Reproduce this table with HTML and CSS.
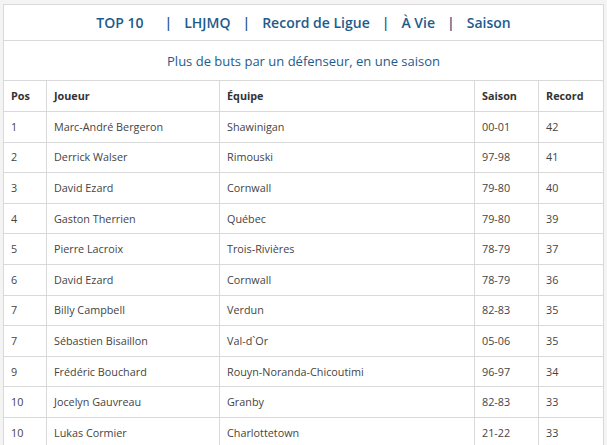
FILE: index.html
```html
<!DOCTYPE html>
<html lang="fr">
<head>
<meta charset="utf-8">
<title>Records LHJMQ</title>
<link rel="stylesheet" href="styles.css">
</head>
<body>
<div class="wrap">
<table class="records">
  <colgroup>
    <col class="c-pos"><col class="c-player"><col class="c-team"><col class="c-season"><col class="c-record">
  </colgroup>
  <thead>
    <tr class="nav-row">
      <th colspan="5">
        <span class="nav-item nav-first">TOP 10</span><span class="sep">|</span><span class="nav-item">LHJMQ</span><span class="sep">|</span><span class="nav-item">Record de Ligue</span><span class="sep">|</span><span class="nav-item">À Vie</span><span class="sep">|</span><span class="nav-item">Saison</span>
      </th>
    </tr>
    <tr class="sub-row">
      <th colspan="5">Plus de buts par un défenseur, en une saison</th>
    </tr>
    <tr class="head-row">
      <th>Pos</th><th>Joueur</th><th>Équipe</th><th>Saison</th><th>Record</th>
    </tr>
  </thead>
  <tbody>
    <tr><td>1</td><td>Marc-André Bergeron</td><td>Shawinigan</td><td>00-01</td><td>42</td></tr>
    <tr><td>2</td><td>Derrick Walser</td><td>Rimouski</td><td>97-98</td><td>41</td></tr>
    <tr><td>3</td><td>David Ezard</td><td>Cornwall</td><td>79-80</td><td>40</td></tr>
    <tr><td>4</td><td>Gaston Therrien</td><td>Québec</td><td>79-80</td><td>39</td></tr>
    <tr><td>5</td><td>Pierre Lacroix</td><td>Trois-Rivières</td><td>78-79</td><td>37</td></tr>
    <tr><td>6</td><td>David Ezard</td><td>Cornwall</td><td>78-79</td><td>36</td></tr>
    <tr><td>7</td><td>Billy Campbell</td><td>Verdun</td><td>82-83</td><td>35</td></tr>
    <tr><td>7</td><td>Sébastien Bisaillon</td><td>Val-d`Or</td><td>05-06</td><td>35</td></tr>
    <tr><td>9</td><td>Frédéric Bouchard</td><td>Rouyn-Noranda-Chicoutimi</td><td>96-97</td><td>34</td></tr>
    <tr><td>10</td><td>Jocelyn Gauvreau</td><td>Granby</td><td>82-83</td><td>33</td></tr>
    <tr><td>10</td><td>Lukas Cormier</td><td>Charlottetown</td><td>21-22</td><td>33</td></tr>
  </tbody>
</table>
</div>
</body>
</html>
```

FILE: styles.css
```css
html, body {
  margin: 0;
  padding: 0;
  background: #f4f4f4;
}
body {
  font-family: "Open Sans", "Liberation Sans", sans-serif;
  color: #333;
}
.wrap {
  padding: 4px 4px 0 3px;
}
.records {
  width: 600px;
  border-collapse: collapse;
  table-layout: fixed;
  background: #fff;
  border: 1px solid #d9d9d9;
}
.c-pos { width: 43px; }
.c-player { width: 173px; }
.c-team { width: 255px; }
.c-season { width: 64px; }
.c-record { width: 65px; }

.records th, .records td {
  border: 1px solid #d9d9d9;
  padding: 0 0 0 7px;
  text-align: left;
  font-size: 10.8px;
  line-height: 16px;
  white-space: nowrap;
}
.nav-row th {
  height: 35px;
  padding: 0;
  text-align: center;
  font-size: 14px;
  font-weight: 600;
  color: #1e5b8c;
}
.nav-item { display: inline-block; }
.nav-first { margin-right: 9px; }
.sep {
  display: inline-block;
  margin: 0 12px;
}
.sub-row th {
  height: 39px;
  padding: 0;
  text-align: center;
  font-size: 13px;
  font-weight: 400;
  color: #1e5b8c;
}
.head-row th {
  height: 30px;
  font-weight: 700;
  color: #333;
}
.records tbody tr {
  height: 30.6px;
}
.records td {
  color: #444;
}
```
